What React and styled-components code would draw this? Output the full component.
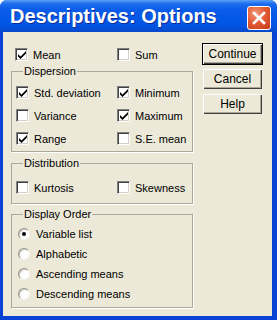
import React from 'react'
import styled, { createGlobalStyle } from 'styled-components'

const Global = createGlobalStyle`
  html, body {
    margin: 0;
    padding: 0;
    background: #ffffff;
  }
  body {
    font-family: "Liberation Sans", Arial, sans-serif;
  }
`

const App = () => {
  return (
    <Window>
      <Global />
      <TitleBar>
        <Title>Descriptives: Options</Title>
        <CloseButton aria-label="Close">
          <svg width="14" height="14" viewBox="0 0 14 14">
            <path d="M2 2 L12 12 M12 2 L2 12" stroke="#fff" strokeWidth="2.6" strokeLinecap="square" />
          </svg>
        </CloseButton>
      </TitleBar>
      <Frame>
        <Body>
          <Options>
            <TopRow>
              <Check label="Mean" checked />
              <Check label="Sum" />
            </TopRow>
            <Group $pt={3} $pb={1}>
              <Legend>Dispersion</Legend>
              <Grid>
                <Check label="Std. deviation" checked />
                <Check label="Minimum" checked />
                <Check label="Variance" />
                <Check label="Maximum" checked />
                <Check label="Range" checked />
                <Check label="S.E. mean" />
              </Grid>
            </Group>
            <Group $pt={6} $pb={4} $mt={5}>
              <Legend>Distribution</Legend>
              <Grid>
                <Check label="Kurtosis" />
                <Check label="Skewness" />
              </Grid>
            </Group>
            <Group $pt={3} $pb={3} $mt={4}>
              <Legend>Display Order</Legend>
              <Radio label="Variable list" checked />
              <Radio label="Alphabetic" />
              <Radio label="Ascending means" />
              <Radio label="Descending means" />
            </Group>
          </Options>
          <Buttons>
            <Button $default>Continue</Button>
            <Button>Cancel</Button>
            <Button>Help</Button>
          </Buttons>
        </Body>
      </Frame>
    </Window>
  )
}

const Check = ({ label, checked }) => (
  <Row>
    <Box>
      {checked && (
        <svg width="8" height="8" viewBox="0 0 8 8">
          <path d="M0 3 L0 5.5 L2.5 8 L8 2.5 L8 0 L2.5 5.5 Z" fill="#000" />
        </svg>
      )}
    </Box>
    <Label>{label}</Label>
  </Row>
)

const Radio = ({ label, checked }) => (
  <RadioRow>
    <Dot $on={checked} />
    <Label $gap={6}>{label}</Label>
  </RadioRow>
)

export default App

const Window = styled.div`
  width: 277px;
  height: 320px;
  display: flex;
  flex-direction: column;
  background: #0842d4;
  border-radius: 7px 7px 0 0;
  overflow: hidden;
`

const TitleBar = styled.div`
  height: 32px;
  display: flex;
  align-items: center;
  justify-content: space-between;
  padding: 0 5px 0 10px;
  background: linear-gradient(
    to bottom,
    #5aa0f7 0%,
    #1d6cee 12%,
    #0b5ce9 30%,
    #0458e7 60%,
    #0252df 85%,
    #0848c8 100%
  );
  box-sizing: border-box;
`

const Title = styled.div`
  color: #ffffff;
  font-family: "Liberation Sans", Arial, sans-serif;
  font-weight: bold;
  font-size: 20px;
  text-shadow: 1px 1px 0 #0a2f99;
  padding-top: 1px;
`

const CloseButton = styled.div`
  width: 22px;
  height: 22px;
  margin-top: 3px;
  margin-right: 1px;
  border: 1px solid #ffffff;
  border-radius: 3px;
  background: radial-gradient(circle at 35% 30%, #f09a7c 0%, #e35c36 45%, #c23b16 100%);
  display: flex;
  align-items: center;
  justify-content: center;
`

const Frame = styled.div`
  flex: 1;
  display: flex;
  padding: 0 5px 4px 3px;
`

const Body = styled.div`
  flex: 1;
  display: flex;
  gap: 9px;
  padding: 11px 9px 0 8px;
  background: #ece9d8;
`

const Options = styled.div`
  width: 182px;
  display: flex;
  flex-direction: column;
`

const TopRow = styled.div`
  display: grid;
  grid-template-columns: 102px 1fr;
  height: 21px;
  align-items: center;
  padding-left: 4px;
  margin-bottom: 1px;
`

const Group = styled.fieldset`
  margin: ${p => p.$mt || 0}px 0 0 0;
  padding: ${p => p.$pt}px 0 ${p => p.$pb}px 4px;
  border: 1px solid #aca899;
  box-shadow: 1px 1px 0 #ffffff;
  min-width: 0;
`

const Legend = styled.legend`
  font-size: 11px;
  line-height: 13px;
  color: #000000;
  padding: 0 1px;
  margin-left: 7px;
`

const Grid = styled.div`
  display: grid;
  grid-template-columns: 101px 1fr;
`

const Row = styled.div`
  display: flex;
  align-items: center;
  height: 23px;
`

const RadioRow = styled.div`
  display: flex;
  align-items: center;
  height: 20px;
  padding-left: 2px;
`

const Box = styled.div`
  width: 13px;
  height: 13px;
  box-sizing: border-box;
  background: #ffffff;
  border-top: 1px solid #808080;
  border-left: 1px solid #808080;
  border-bottom: 1px solid #ffffff;
  border-right: 1px solid #ffffff;
  box-shadow: inset 1px 1px 0 #404040, inset -1px -1px 0 #d4d0c8;
  display: flex;
  align-items: center;
  justify-content: center;
  flex-shrink: 0;
`

const Dot = styled.div`
  width: 12px;
  height: 12px;
  box-sizing: border-box;
  border-radius: 50%;
  background: radial-gradient(circle at 60% 60%, #ffffff 45%, #e4e2d8 100%);
  border: 1px solid;
  border-color: #9a988c #f4f3ee #f4f3ee #9a988c;
  box-shadow: inset 1px 1px 0 #c8c6bb;
  position: relative;
  flex-shrink: 0;
  &::after {
    content: '';
    display: ${p => (p.$on ? 'block' : 'none')};
    position: absolute;
    left: 3px;
    top: 3px;
    width: 4px;
    height: 4px;
    border-radius: 50%;
    background: #000000;
  }
`

const Label = styled.span`
  font-size: 11px;
  color: #000000;
  margin-left: ${p => p.$gap || 5}px;
  white-space: nowrap;
`

const Buttons = styled.div`
  width: 61px;
  display: flex;
  flex-direction: column;
  gap: 3px;
`

const Button = styled.div`
  height: 22px;
  box-sizing: border-box;
  display: flex;
  align-items: center;
  justify-content: center;
  font-size: 12px;
  color: #000000;
  background: #ece9d8;
  border: 1px solid ${p => (p.$default ? '#000000' : 'transparent')};
  box-shadow: inset 1px 1px 0 #ffffff, inset -1px -1px 0 #404040, inset -2px -2px 0 #aca899;
`
